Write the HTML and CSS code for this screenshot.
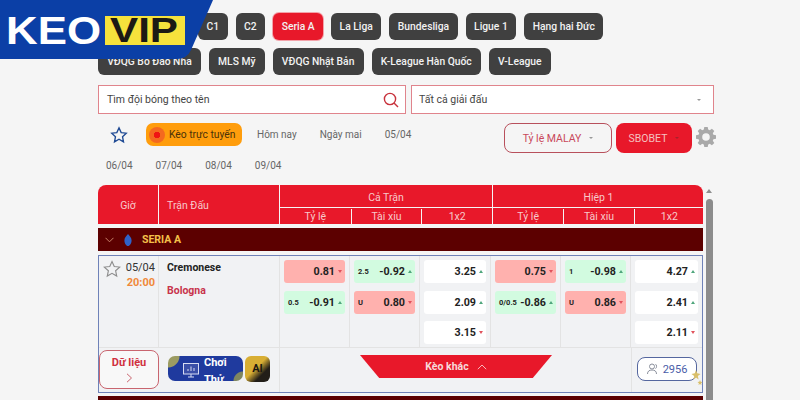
FILE: index.html
```html
<!DOCTYPE html>
<html lang="en">
<head>
  <meta charset="UTF-8">
  <meta name="viewport" content="width=device-width, initial-scale=1.0">
  <title>Keo VIP</title>
  <link rel="stylesheet" href="styles.css">
</head>
<body>
  <!-- Logo sits over the first chips -->
  <svg class="logo" width="214" height="60" viewBox="0 0 214 60">
    <path d="M0 0H213L191 50Q187 59 177 59H0Z" fill="#0b3fa6"/>
    <text class="logo-keo" x="6" y="44" textLength="95" lengthAdjust="spacingAndGlyphs">KEO</text>
    <rect x="105" y="16" width="80" height="29" fill="#f6e23c"/>
    <text class="logo-vip" x="110" y="42" textLength="68" lengthAdjust="spacingAndGlyphs">VIP</text>
  </svg>

  <div class="page">
    <div class="chips chips-top">
      <a class="chip">C1</a>
      <a class="chip">C2</a>
      <a class="chip active">Seria A</a>
      <a class="chip">La Liga</a>
      <a class="chip">Bundesliga</a>
      <a class="chip">Ligue 1</a>
      <a class="chip">Hạng hai Đức</a>
    </div>
    <div class="chips chips-bottom">
      <a class="chip">VĐQG Bồ Đào Nha</a>
      <a class="chip">MLS Mỹ</a>
      <a class="chip">VĐQG Nhật Bản</a>
      <a class="chip">K-League Hàn Quốc</a>
      <a class="chip">V-League</a>
    </div>

    <div class="filters">
      <div class="field search">
        <span>Tìm đội bóng theo tên</span>
        <svg width="16" height="16" viewBox="0 0 16 16" fill="none" stroke="#c8323c" stroke-width="1.4">
          <circle cx="7" cy="7" r="5.6"/>
          <path d="M11 11l4 4"/>
        </svg>
      </div>
      <div class="field select">
        <span>Tất cả giải đấu</span>
        <i class="caret"></i>
      </div>
    </div>

    <div class="toolbar">
      <div class="dates">
        <div class="tabs">
          <svg class="tab-star" width="18" height="18" viewBox="0 0 24 24" fill="none" stroke="#1f4a94" stroke-width="1.8">
            <path d="M12 2.5l2.9 6.3 6.8.8-5 4.7 1.3 6.8-6-3.4-6 3.4 1.3-6.8-5-4.7 6.8-.8z"/>
          </svg>
          <div class="live"><i class="live-dot"></i>Kèo trực tuyến</div>
          <a class="tab">Hôm nay</a>
          <a class="tab">Ngày mai</a>
          <a class="tab">05/04</a>
        </div>
        <div class="tabs-days">
          <a class="tab">06/04</a>
          <a class="tab">07/04</a>
          <a class="tab">08/04</a>
          <a class="tab">09/04</a>
        </div>
      </div>
      <div class="actions">
        <div class="btn-odds">Tỷ lệ MALAY <i class="caret"></i></div>
        <div class="btn-book">SBOBET <i class="caret caret-dark"></i></div>
        <svg class="gear" width="20" height="20" viewBox="0 0 20 20">
          <path fill="#a9a9a9" fill-rule="evenodd" d="M8.3 0h3.4l.5 2.6 1.5.6 2.2-1.5 2.4 2.4-1.5 2.2.6 1.5 2.6.5v3.4l-2.6.5-.6 1.5 1.5 2.2-2.4 2.4-2.2-1.5-1.5.6-.5 2.6H8.3l-.5-2.6-1.5-.6-2.2 1.5-2.4-2.4 1.5-2.2-.6-1.5L0 11.7V8.3l2.6-.5.6-1.5-1.5-2.2 2.4-2.4 2.2 1.5 1.5-.6zM10 6.2a3.8 3.8 0 1 0 0 7.6 3.8 3.8 0 0 0 0-7.6z"/>
        </svg>
      </div>
    </div>

    <div class="board">
      <div class="table">
        <div class="thead">
          <div class="th th-time">Giờ</div>
          <div class="th th-match">Trận Đấu</div>
          <div class="th-group">
            <div class="th-title">Cả Trận</div>
            <div class="th-subs"><span>Tỷ lệ</span><span>Tài xỉu</span><span>1x2</span></div>
          </div>
          <div class="th-group">
            <div class="th-title">Hiệp 1</div>
            <div class="th-subs"><span>Tỷ lệ</span><span>Tài xỉu</span><span>1x2</span></div>
          </div>
        </div>

        <div class="league">
          <svg width="9" height="6" viewBox="0 0 9 6" fill="none" stroke="#c9826a" stroke-width="1"><path d="M.5 .8l4 4 4-4"/></svg>
          <svg width="8" height="12" viewBox="0 0 8 12"><path fill="#2f62c8" d="M4 0c1.6 2 3.6 3.600 3.600 6.500S5.800 12 4 12 .4 9.400 .4 6.500 2.400 2 4 0z"/></svg>
          <span>SERIA A</span>
        </div>

        <div class="match">
          <div class="match-main">
            <div class="cell-time">
              <svg width="18" height="18" viewBox="0 0 24 24" fill="none" stroke="#8d8d8d" stroke-width="1.5">
                <path d="M12 2l3 6.600 7.200.8-5.400 4.900 1.500 7.100L12 17.800l-6.300 3.600 1.500-7.100L1.800 9.400 9 8.600z"/>
              </svg>
              <div class="kick">
                <div>05/04</div>
                <div class="kick-hour">20:00</div>
              </div>
            </div>
            <div class="cell-teams">
              <div class="home">Cremonese</div>
              <div class="away">Bologna</div>
            </div>

            <div class="odds">
              <div class="odd lose"><b>0.81</b><i class="down"></i></div>
              <div class="odd win"><small>0.5</small><b>-0.91</b><i class="up"></i></div>
            </div>
            <div class="odds">
              <div class="odd win"><small>2.5</small><b>-0.92</b><i class="up"></i></div>
              <div class="odd lose"><small>U</small><b>0.80</b><i class="down"></i></div>
            </div>
            <div class="odds">
              <div class="odd"><b>3.25</b><i class="up"></i></div>
              <div class="odd"><b>2.09</b><i class="up"></i></div>
              <div class="odd"><b>3.15</b><i class="down"></i></div>
            </div>
            <div class="odds">
              <div class="odd lose"><b>0.75</b><i class="down"></i></div>
              <div class="odd win"><small>0/0.5</small><b>-0.86</b><i class="up"></i></div>
            </div>
            <div class="odds">
              <div class="odd win"><small>1</small><b>-0.98</b><i class="up"></i></div>
              <div class="odd lose"><small>U</small><b>0.86</b><i class="down"></i></div>
            </div>
            <div class="odds">
              <div class="odd"><b>4.27</b><i class="up"></i></div>
              <div class="odd"><b>2.41</b><i class="up"></i></div>
              <div class="odd"><b>2.11</b><i class="down"></i></div>
            </div>
          </div>

          <div class="match-foot">
            <div class="foot-data">
              <div class="btn-data">
                <span>Dữ liệu</span>
                <svg width="7" height="10" viewBox="0 0 7 10" fill="none" stroke="#c9656f" stroke-width="1"><path d="M1 .8l4.500 4.200L1 9.200"/></svg>
              </div>
            </div>
            <div class="foot-play">
              <div class="btn-play">
                <svg width="16" height="15" viewBox="0 0 16 15" fill="none" stroke="#d7dcf2" stroke-width="1">
                  <rect x=".5" y=".5" width="15" height="10.500" fill="#3a4fa8"/>
                  <path d="M5 14h6M8 11v3M5 8V6M8 8V3.500M11 8V5"/>
                </svg>
                <span>Chơi<br>Thử</span>
              </div>
              <div class="btn-ai">AI</div>
            </div>
            <div class="foot-more">
              <div class="btn-more">Kèo khác
                <svg width="10" height="6" viewBox="0 0 10 6" fill="none" stroke="#f7b7ba" stroke-width="1"><path d="M.8 5.200L5 1l4.200 4.200"/></svg>
              </div>
            </div>
            <div class="foot-count">
              <div class="btn-count">
                <svg width="12" height="12" viewBox="0 0 12 12" fill="none" stroke="#8a8f9c" stroke-width="1"><circle cx="5" cy="3.500" r="2.500"/><path d="M.5 11c0-3 2-4 4.500-4s4.500 1 4.500 4M8.500 1.200c1.400.5 1.400 3.800 0 4.400"/></svg>
                2956
              </div>
              <svg class="sparkles" width="12" height="16" viewBox="0 0 12 16" fill="#d9bf6a">
                <path d="M5 0l1.200 3.300L9.500 4 6.800 6l.8 3.500L5 7.600 2.400 9.500 3.200 6 .5 4l3.300-.7z"/>
                <path d="M9 10l.7 1.700 1.800.3-1.400 1.200.4 1.800L9 14l-1.500 1 .4-1.800L6.500 12l1.800-.3z"/>
              </svg>
            </div>
          </div>
        </div>

        <div class="league league-next"></div>
      </div>

      <div class="scrollbar">
        <i class="scroll-arrow"></i>
        <div class="scroll-thumb"></div>
      </div>
    </div>
  </div>
</body>
</html>
```

FILE: styles.css
```css
* {
  box-sizing: border-box;
}
html, body {
  height: 400px;
  overflow: hidden;
}
body {
  margin: 0;
  background-color: #f5f5f5;
  font-family: Roboto, "Noto Sans", sans-serif;
  color: #333;
}
i {
  display: block;
}
.logo {
  position: absolute;
  left: 0;
  top: 0;
}
.logo-keo {
  font-family: "Liberation Sans", sans-serif;
  font-weight: 700;
  font-size: 38px;
  fill: #fff;
}
.logo-vip {
  font-family: "Liberation Sans", sans-serif;
  font-weight: 700;
  font-size: 35px;
  fill: #1c1a14;
}
.page {
  height: 400px;
  overflow: hidden;
  padding: 13px 0 0 98px;
}

/* league chips */
.chips {
  display: flex;
  gap: 8px;
  margin-bottom: 8px;
}
.chips-top {
  padding-left: 100px;
}
.chip {
  display: flex;
  align-items: center;
  height: 27px;
  padding: 0 8.500px;
  background: #404040;
  color: #f2f2f2;
  border-radius: 6px;
  font-size: 10.3px;
  font-weight: 500;
  white-space: nowrap;
}
.chips-bottom .chip {
  padding: 0 9.200px;
}
.chip.active {
  background: #e8182a;
  box-shadow: 0 0 0 1px #f3a3aa;
}

/* search row */
.filters {
  display: flex;
  gap: 5px;
  margin-top: 10px;
}
.field {
  display: flex;
  align-items: center;
  justify-content: space-between;
  height: 29px;
  background: #fff;
  border: 1px solid #e0848c;
  font-size: 10.5px;
  color: #444;
}
.search {
  width: 308px;
  padding: 0 6px 0 8px;
}
.select {
  width: 303px;
  padding: 0 12px 0 7px;
}
.caret {
  width: 0;
  height: 0;
  border-left: 2px solid transparent;
  border-right: 2px solid transparent;
  border-top: 2px solid #999;
}

/* date tabs and bookmaker buttons */
.toolbar {
  display: flex;
  justify-content: space-between;
  width: 618px;
  margin-top: 9px;
}
.tabs {
  display: flex;
  align-items: center;
  height: 23px;
  padding-left: 12px;
}
.tab-star {
  margin-right: 18px;
}
.live {
  display: flex;
  align-items: center;
  gap: 4px;
  width: 96px;
  height: 23px;
  padding-left: 3px;
  margin-right: 15px;
  background: #ff9d0c;
  border-radius: 7px;
  font-size: 10.3px;
  color: #4a3208;
  white-space: nowrap;
}
.live-dot {
  width: 16px;
  height: 16px;
  border-radius: 50%;
  background: radial-gradient(circle, #f01414 3px, #f4691f 3.500px);
}
.tab {
  margin-right: 23px;
  font-size: 10px;
  color: #666;
  white-space: nowrap;
}
.tabs-days {
  display: flex;
  padding-left: 8px;
  margin-top: 14px;
}
.actions {
  display: flex;
  align-items: flex-start;
}
.btn-odds, .btn-book {
  display: flex;
  align-items: center;
  justify-content: center;
  gap: 8px;
  height: 30px;
  border-radius: 8px;
  font-size: 10.5px;
}
.btn-odds {
  width: 108px;
  margin-right: 4px;
  border: 1px solid #b8505c;
  color: #c9485a;
}
.btn-book {
  width: 76px;
  margin-right: 4px;
  background: #e8182a;
  color: #f5c0c0;
}
.caret-dark {
  border-top-color: #a8202a;
}
.gear {
  margin-top: 4px;
}

/* odds table */
.board {
  display: flex;
  gap: 2px;
  margin-top: 14px;
}
.table {
  width: 605px;
}
.thead {
  display: grid;
  grid-template-columns: 61px 121px 212px 212px;
  height: 39px;
  background: #e8182a;
  border-radius: 8px 8px 0 0;
  color: #f7c9cb;
  font-size: 10.5px;
}
.th {
  display: flex;
  align-items: center;
  border-right: 1px solid #f5f5f5;
}
.th-time {
  justify-content: center;
}
.th-match {
  padding-left: 8px;
}
.th-group {
  display: flex;
  flex-direction: column;
}
.th-group + .th-group {
  border-left: 1px solid #f5f5f5;
}
.th-title {
  height: 23px;
  padding-top: 1px;
  line-height: 23px;
  text-align: center;
  border-bottom: 1px solid #f5f5f5;
}
.th-subs {
  display: grid;
  grid-template-columns: repeat(3, 1fr);
  flex: 1;
  margin-top: 1px;
  text-align: center;
  line-height: 16px;
}
.th-subs span + span {
  border-left: 1px solid #f5f5f5;
}
.league {
  display: flex;
  align-items: center;
  gap: 10px;
  height: 23px;
  margin-top: 4px;
  padding-left: 7px;
  background: #5c0000;
  color: #f4c04a;
  font-size: 10.5px;
  font-weight: 700;
}
.match {
  margin-top: 4px;
  height: 138px;
  background: #f1f2f4;
  border: 1px solid #6f82b8;
}
.match-main {
  display: grid;
  grid-template-columns: 60px 121px 70px 70px 71px 70px 70px 71px;
  height: 92px;
  border-bottom: 1px solid #e3e3e3;
}
.cell-time {
  display: flex;
  justify-content: space-between;
  padding: 4px 3px 0 4px;
  border-right: 1px solid #e3e3e3;
  font-size: 11px;
  color: #333;
}
.kick {
  text-align: right;
  line-height: 15px;
}
.kick-hour {
  color: #f0893a;
  font-weight: 700;
}
.cell-teams {
  padding: 5px 0 0 8px;
  border-right: 1px solid #e3e3e3;
  font-size: 10.5px;
  font-weight: 700;
  line-height: 14px;
  color: #222;
}
.away {
  margin-top: 9px;
  color: #c8344c;
}
.odds {
  display: flex;
  flex-direction: column;
  gap: 7.5px;
  padding: 4px 4px 0;
  border-right: 1px solid #e3e3e3;
}
.odds:last-child {
  border-right: 0;
}
.odd {
  display: flex;
  align-items: center;
  height: 23px;
  padding: 0 3px 0 4px;
  background: #fff;
  border-radius: 3px;
  color: #222;
}
.odd.win {
  background: #d2fbe0;
}
.odd.lose {
  background: #ffb1ae;
}
.odd small {
  font-size: 7.5px;
  font-weight: 700;
}
.odd b {
  margin-left: auto;
  font-size: 10.7px;
  font-weight: 700;
}
.odd i {
  width: 0;
  height: 0;
  margin-left: 3px;
  border-left: 2px solid transparent;
  border-right: 2px solid transparent;
}
.up {
  border-bottom: 3px solid #4fa67c;
}
.down {
  border-top: 3px solid #e0525c;
}

/* bottom row of the match */
.match-foot {
  display: grid;
  grid-template-columns: 60px 121px 1fr 70px;
  height: 44px;
}
.foot-data {
  padding-top: 2px;
}
.btn-data {
  display: flex;
  flex-direction: column;
  align-items: center;
  gap: 3px;
  height: 39px;
  padding-top: 5px;
  background: #f8f8f8;
  border: 1px solid #c9656f;
  border-radius: 8px;
  font-size: 11px;
  font-weight: 700;
  line-height: 14px;
  color: #d0303e;
}
.foot-play {
  display: flex;
  gap: 2px;
  padding: 8px 0 0 9px;
  border-right: 1px solid #e3e3e3;
}
.btn-play {
  display: flex;
  gap: 5px;
  align-items: center;
  width: 75px;
  height: 25px;
  padding: 4px 0 0 15px;
  overflow: hidden;
  background-color: #1f3a9e;
  background-image: radial-gradient(circle at 0 0, #9b9b62 11px, transparent 12px), radial-gradient(circle at 100% 100%, #7f8660 9px, transparent 10px);
  border-radius: 7px;
  color: #fff;
  font-size: 11px;
  font-weight: 700;
  line-height: 17px;
}
.btn-ai {
  width: 25px;
  height: 26px;
  background: linear-gradient(135deg, #d8ae34 45%, #221e18 70%);
  border-radius: 6px;
  text-align: center;
  font-size: 11px;
  font-weight: 700;
  line-height: 26px;
  color: #1b1710;
}
.foot-more {
  padding: 7px 0 0 80px;
  border-right: 1px solid #e3e3e3;
}
.btn-more {
  display: flex;
  align-items: center;
  justify-content: center;
  gap: 8px;
  width: 192px;
  height: 23px;
  background: #e8182a;
  clip-path: polygon(0 0, 100% 0, 90% 100%, 10% 100%);
  color: #f7d9da;
  font-size: 10.5px;
  font-weight: 700;
}
.foot-count {
  position: relative;
  padding: 9px 0 0 5px;
}
.btn-count {
  display: flex;
  align-items: center;
  justify-content: center;
  gap: 4px;
  width: 60px;
  height: 24px;
  background: #fff;
  border: 1px solid #55679f;
  border-radius: 8px;
  font-size: 11px;
  color: #4a5da8;
}
.sparkles {
  position: absolute;
  left: 59px;
  top: 22px;
}
.league-next {
  margin-top: 3px;
}

/* fake scrollbar beside the table */
.scrollbar {
  display: flex;
  flex-direction: column;
  align-items: center;
  width: 8px;
}
.scroll-arrow {
  width: 0;
  height: 0;
  margin-top: 4px;
  border-left: 3px solid transparent;
  border-right: 3px solid transparent;
  border-bottom: 4px solid #8f8f8f;
}
.scroll-thumb {
  width: 7px;
  height: 220px;
  margin-top: 6px;
  background: #8c8c8c;
  border-radius: 4px 4px 0 0;
}
```
